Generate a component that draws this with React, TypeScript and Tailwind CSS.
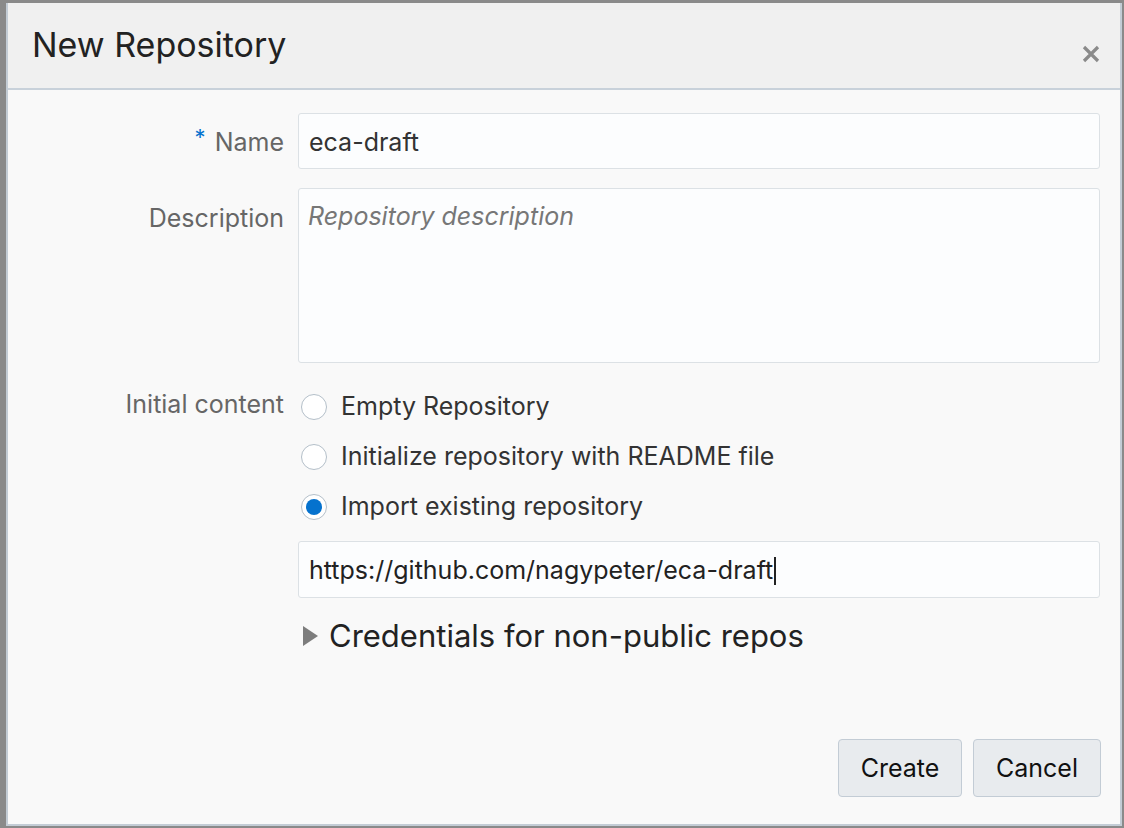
import { useState } from "react";

const font = { fontFamily: "Inter, 'Liberation Sans', sans-serif" };

function Radio({ checked, label }: { checked?: boolean; label: string }) {
  return (
    <label className="flex h-[50px] items-center gap-[14px]">
      <span className="flex size-[26px] items-center justify-center rounded-full border border-[#b4bfc9] bg-white">
        {checked && <span className="size-[16px] rounded-full bg-[#0572ce]" />}
      </span>
      <span className="text-[25px] text-[#333]">{label}</span>
    </label>
  );
}

export default function App() {
  const [url] = useState("https://github.com/nagypeter/eca-draft");
  return (
    <div className="h-[828px] w-[1124px] bg-[#8a8a8a] pl-[6px] pt-[3px]" style={font}>
      <div className="flex h-[823px] w-[1116px] flex-col border-x-2 border-b-2 border-[#c3ccd5] bg-[#f9f9f9]">
        <div className="flex h-[87px] items-center justify-between border-b-2 border-[#c8d1da] bg-[#f0f0f0] pl-[24px] pr-[20px]">
          <h1 className="text-[34px] leading-none text-[#222] -mt-[2px]">New Repository</h1>
          <svg width="18" height="18" viewBox="0 0 18 18" className="mt-[16px]">
            <path d="M2 2 L16 16 M16 2 L2 16" stroke="#8a8a8a" strokeWidth="3.2" />
          </svg>
        </div>

        <div className="grid flex-1 grid-cols-[276px_1fr] content-start gap-x-[14px] pr-[20px] pt-[23px]">
          <div className="flex h-[56px] items-center justify-end gap-[9px] pt-[4px] text-[25px] text-[#666]">
            <span className="-mt-[12px] text-[22px] text-[#0572ce]">*</span>
            <span>Name</span>
          </div>
          <div className="flex h-[56px] items-center rounded-[3px] border border-[#dce1e5] bg-[#fcfdfe] px-[10px] pt-[4px] text-[25px] text-[#333]">
            eca-draft
          </div>

          <div className="mt-[19px] pt-[12px] text-right text-[25px] text-[#666]">Description</div>
          <div className="mt-[19px] h-[175px] rounded-[3px] border border-[#dce1e5] bg-[#fcfdfe] px-[9px] pt-[9px] text-[25px] italic text-[#777]">
            Repository description
          </div>

          <div className="mt-[19px] flex h-[50px] items-center justify-end text-[25px] text-[#666] -translate-y-[2px]">
            Initial content
          </div>
          <div className="mt-[19px] flex flex-col pl-[3px]">
            <Radio label="Empty Repository" />
            <Radio label="Initialize repository with README file" />
            <Radio checked label="Import existing repository" />
          </div>

          <div />
          <div className="mt-[9px] flex h-[57px] items-center rounded-[3px] border border-[#dce1e5] bg-[#fcfdfe] px-[10px] pt-[2px] text-[25px] text-[#222]">
            {url}
            <span className="ml-[1px] h-[28px] w-[2px] bg-[#222]" />
          </div>

          <div />
          <div className="mt-[15px] flex items-center gap-[11px] pl-[5px]">
            <svg width="15" height="20" viewBox="0 0 15 20">
              <path d="M0 0 L15 10 L0 20 Z" fill="#7d7d7d" />
            </svg>
            <span className="text-[31px] text-[#222]">Credentials for non-public repos</span>
          </div>
        </div>

        <div className="flex justify-end gap-[11px] pb-[27px] pr-[19px]">
          <button className="h-[58px] w-[124px] rounded-[4px] border border-[#c3ccd5] bg-[#e8ebee] pt-[2px] text-[25px] text-[#111]">
            Create
          </button>
          <button className="h-[58px] w-[128px] rounded-[4px] border border-[#c3ccd5] bg-[#e8ebee] pt-[2px] text-[25px] text-[#111]">
            Cancel
          </button>
        </div>
      </div>
    </div>
  );
}
